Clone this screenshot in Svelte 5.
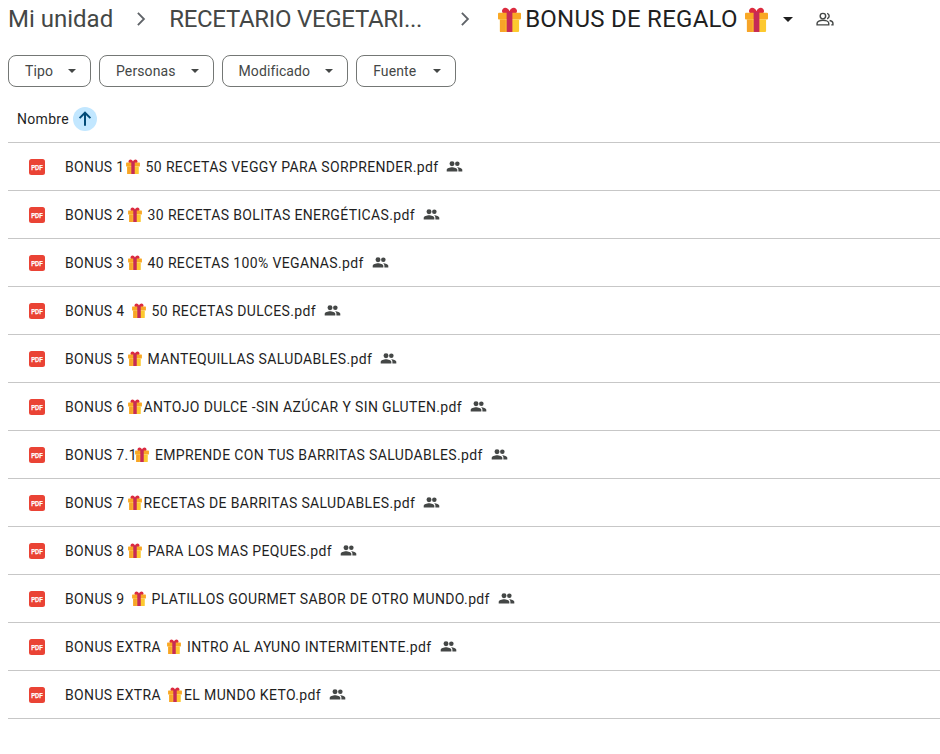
<script>
  const filters = ["Tipo", "Personas", "Modificado", "Fuente"];

  // before / after the gift, split so the emoji sits inside the name
  const files = [
    ["BONUS 1", "50 RECETAS VEGGY PARA SORPRENDER.pdf", 1, 6],
    ["BONUS 2", "30 RECETAS BOLITAS ENERGÉTICAS.pdf", 3, 6],
    ["BONUS 3", "40 RECETAS 100% VEGANAS.pdf", 3, 6],
    ["BONUS 4", "50 RECETAS DULCES.pdf", 7, 6],
    ["BONUS 5", "MANTEQUILLAS SALUDABLES.pdf", 3, 6],
    ["BONUS 6", "ANTOJO DULCE -SIN AZÚCAR Y SIN GLUTEN.pdf", 3, 2],
    ["BONUS 7.1", "EMPRENDE CON TUS BARRITAS SALUDABLES.pdf", -2, 6],
    ["BONUS 7", "RECETAS DE BARRITAS SALUDABLES.pdf", 3, 2],
    ["BONUS 8", "PARA LOS MAS PEQUES.pdf", 3, 6],
    ["BONUS 9", "PLATILLOS GOURMET SABOR DE OTRO MUNDO.pdf", 7, 6],
    ["BONUS EXTRA", "INTRO AL AYUNO INTERMITENTE.pdf", 6, 6],
    ["BONUS EXTRA", "EL MUNDO KETO.pdf", 7, 2],
  ];
</script>

{#snippet gift(cls)}
  <svg class={cls} viewBox="0 0 24 26" aria-hidden="true">
    <path d="M5 2c2-2.500 6-1 7 2.500C13 1 17-.5 19 2c1.800 2.300.5 5-2 5.500H7C4.500 7 3.200 4.300 5 2z" fill="#dc2b3f" />
    <rect x="0" y="6" width="24" height="7" rx="1" fill="#f9a825" />
    <rect x="2" y="13" width="20" height="13" rx="1" fill="#fdc92f" />
    <rect x="2" y="13" width="6" height="13" fill="#f7a428" />
    <rect x="9" y="5" width="6" height="21" fill="#c62a57" />
  </svg>
{/snippet}

{#snippet caret()}
  <svg class="caret" viewBox="0 0 10 5" aria-hidden="true"><path d="M0 0h10L5 5z" /></svg>
{/snippet}

{#snippet chevron()}
  <svg class="chevron" viewBox="0 0 24 24" aria-hidden="true"><path d="M8.600 5.400 15.200 12l-6.600 6.600" /></svg>
{/snippet}

<main>
  <nav class="crumbs">
    <span class="crumb">Mi unidad</span>
    {@render chevron()}
    <span class="crumb middle">RECETARIO VEGETARI...</span>
    {@render chevron()}
    <span class="current">
      {@render gift("gift-big")}
      <span class="folder">BONUS DE REGALO</span>
      {@render gift("gift-big")}
    </span>
    <svg class="caret top-caret" viewBox="0 0 10 5" aria-hidden="true"><path d="M0 0h10L5 5z" /></svg>
    <svg class="shared-outline" viewBox="0 0 24 24" aria-hidden="true">
      <circle cx="9.500" cy="8.500" r="3.300" />
      <path d="M2.500 19v-1.800c0-2.200 3.500-3.700 7-3.700s7 1.500 7 3.700V19z" />
      <path d="M14.500 5.300a3.300 3.300 0 0 1 0 6.400M17.500 13.800c2.300.5 4 1.700 4 3.400V19h-2" />
    </svg>
  </nav>

  <div class="filters">
    {#each filters as label}
      <button class="chip">
        <span>{label}</span>
        {@render caret()}
      </button>
    {/each}
  </div>

  <div class="head">
    <span>Nombre</span>
    <span class="sort">
      <svg viewBox="0 0 24 24" aria-hidden="true"><path d="M12 20V5M5.500 11 12 4.500 18.500 11" /></svg>
    </span>
  </div>

  <ul>
    {#each files as [before, after, gapLeft, gapRight]}
      <li>
        <svg class="pdf" viewBox="0 0 16 16" aria-hidden="true">
          <rect width="16" height="16" rx="2.500" fill="#ea4335" />
          <text x="8" y="10.500" text-anchor="middle" textLength="11.500" lengthAdjust="spacingAndGlyphs">PDF</text>
        </svg>
        <span class="name">
          <span>{before}</span>
          <span class="gift-slot" style="margin: 0 {gapRight}px 0 {gapLeft}px">{@render gift("gift-small")}</span>
          <span>{after}</span>
        </span>
        <svg class="people" viewBox="0 0 24 24" aria-hidden="true">
          <circle cx="8.500" cy="8" r="3.500" />
          <circle cx="16" cy="8" r="3.200" />
          <path d="M1 19v-2.300C1 14.300 5.500 13 8.500 13s7.500 1.300 7.500 3.700V19zM17.500 19v-2.300c0-1.500-.7-2.700-1.900-3.600 3.300.2 7.400 1.500 7.400 3.600V19z" />
        </svg>
      </li>
    {/each}
  </ul>
</main>

<style>
  :global(body) {
    background: #fff;
  }

  main {
    height: 754px;
    padding-left: 8px;
    box-sizing: border-box;
    overflow: hidden;
    font-family: Roboto, "Liberation Sans", sans-serif;
    color: #1f1f1f;
  }

  .crumbs {
    display: flex;
    align-items: center;
    height: 38px;
    font-size: 24px;
    white-space: nowrap;
  }

  .crumb {
    color: #444746;
  }

  .middle {
    letter-spacing: -0.3px;
  }

  .chevron {
    width: 22px;
    height: 22px;
    margin: 0 17px;
    fill: none;
    stroke: #5f6368;
    stroke-width: 2;
  }

  .middle + .chevron {
    margin: 0 23px 0 32px;
  }

  .current {
    display: flex;
    align-items: center;
    margin-left: -1px;
    font-size: 24px;
    letter-spacing: 0.25px;
  }

  .folder {
    margin: 0 7px 0 4px;
  }

  .gift-big {
    width: 23px;
    height: 25px;
  }

  .caret {
    width: 10px;
    height: 5px;
    fill: #444746;
  }

  .top-caret {
    margin-left: 15px;
    fill: #1f1f1f;
  }

  .shared-outline {
    width: 20px;
    height: 20px;
    margin-left: 22px;
    fill: none;
    stroke: #444746;
    stroke-width: 1.700;
  }

  .filters {
    display: flex;
    gap: 8px;
    margin-top: 17px;
  }

  .chip {
    display: flex;
    align-items: center;
    justify-content: space-between;
    height: 32px;
    padding: 0 14px 0 16px;
    border: 1px solid #747775;
    border-radius: 8px;
    background: #fff;
    color: #444746;
    font: 400 14px Roboto, "Liberation Sans", sans-serif;
    letter-spacing: 0.1px;
    gap: 15px;
  }

  .chip:last-child {
    min-width: 100px;
  }

  .chip .caret {
    width: 8px;
    height: 4px;
  }

  .head {
    display: flex;
    align-items: center;
    gap: 4px;
    height: 46px;
    padding: 9px 0 0 9px;
    border-bottom: 1px solid #c7c7c7;
    font-size: 14px;
    letter-spacing: 0.3px;
  }

  .sort {
    display: flex;
    align-items: center;
    justify-content: center;
    width: 24px;
    height: 24px;
    border-radius: 50%;
    background: #c2e7ff;
  }

  .sort svg {
    width: 20px;
    height: 20px;
    fill: none;
    stroke: #004a77;
    stroke-width: 2.400;
  }

  ul {
    margin: 0;
    padding: 0;
    list-style: none;
  }

  li {
    display: flex;
    align-items: center;
    height: 47px;
    padding-left: 21px;
    border-bottom: 1px solid #c7c7c7;
    font-size: 14px;
    letter-spacing: 0.36px;
  }

  .pdf {
    flex: none;
    width: 16px;
    height: 16px;
  }

  .pdf text {
    fill: #fff;
    stroke: #fff;
    stroke-width: 0.25;
    font: 700 7px "Liberation Sans", sans-serif;
    letter-spacing: 0;
  }

  .name {
    display: flex;
    align-items: center;
    margin-left: 20px;
    white-space: nowrap;
  }

  .gift-slot {
    display: flex;
  }

  .gift-small {
    width: 14px;
    height: 15px;
  }

  .people {
    width: 17px;
    height: 17px;
    margin-left: 8px;
    fill: #444746;
  }
</style>
